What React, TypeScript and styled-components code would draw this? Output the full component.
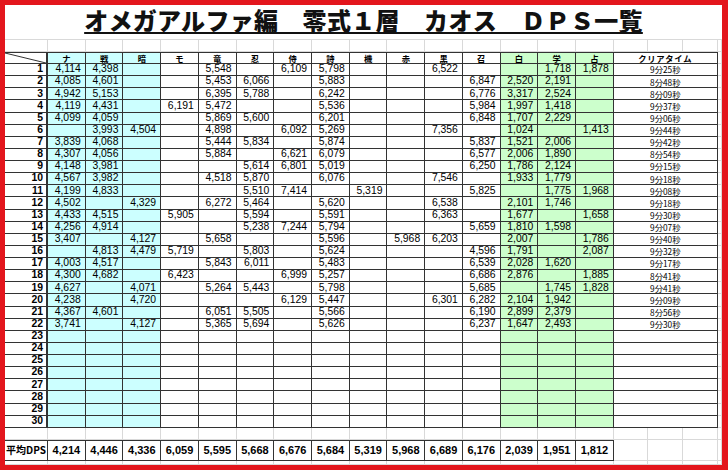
import React from 'react';
import styled, { createGlobalStyle, css } from 'styled-components';

type Tint = 'cyan' | 'green' | 'none';

const JOBS = ['ナ', '戦', '暗', 'モ', '竜', '忍', '侍', '詩', '機', '赤', '黒', '召', '白', '学', '占'];

// 0 = no entry for that job in the run
const RUNS: [number[], string][] = [
  [[4114, 4398, 0, 0, 5548, 0, 6109, 5798, 0, 0, 6522, 0, 0, 1718, 1878], '9分25秒'],
  [[4085, 4601, 0, 0, 5453, 6066, 0, 5883, 0, 0, 0, 6847, 2520, 2191, 0], '8分48秒'],
  [[4942, 5153, 0, 0, 6395, 5788, 0, 6242, 0, 0, 0, 6776, 3317, 2524, 0], '8分09秒'],
  [[4119, 4431, 0, 6191, 5472, 0, 0, 5536, 0, 0, 0, 5984, 1997, 1418, 0], '9分37秒'],
  [[4099, 4059, 0, 0, 5869, 5600, 0, 6201, 0, 0, 0, 6848, 1707, 2229, 0], '9分06秒'],
  [[0, 3993, 4504, 0, 4898, 0, 6092, 5269, 0, 0, 7356, 0, 1024, 0, 1413], '9分44秒'],
  [[3839, 4068, 0, 0, 5444, 5834, 0, 5874, 0, 0, 0, 5837, 1521, 2006, 0], '9分42秒'],
  [[4307, 4056, 0, 0, 5884, 0, 6621, 6079, 0, 0, 0, 6577, 2006, 1890, 0], '8分54秒'],
  [[4148, 3981, 0, 0, 0, 5614, 6801, 5019, 0, 0, 0, 6250, 1786, 2124, 0], '9分15秒'],
  [[4567, 3982, 0, 0, 4518, 5870, 0, 6076, 0, 0, 7546, 0, 1933, 1779, 0], '9分18秒'],
  [[4199, 4833, 0, 0, 0, 5510, 7414, 0, 5319, 0, 0, 5825, 0, 1775, 1968], '9分08秒'],
  [[4502, 0, 4329, 0, 6272, 5464, 0, 5620, 0, 0, 6538, 0, 2101, 1746, 0], '9分18秒'],
  [[4433, 4515, 0, 5905, 0, 5594, 0, 5591, 0, 0, 6363, 0, 1677, 0, 1658], '9分30秒'],
  [[4256, 4914, 0, 0, 0, 5238, 7244, 5794, 0, 0, 0, 5659, 1810, 1598, 0], '9分07秒'],
  [[3407, 0, 4127, 0, 5658, 0, 0, 5596, 0, 5968, 6203, 0, 2007, 0, 1786], '9分40秒'],
  [[0, 4813, 4479, 5719, 0, 5803, 0, 5624, 0, 0, 0, 4596, 1791, 0, 2087], '9分32秒'],
  [[4003, 4517, 0, 0, 5843, 6011, 0, 5483, 0, 0, 0, 6539, 2028, 1620, 0], '9分17秒'],
  [[4300, 4682, 0, 6423, 0, 0, 6999, 5257, 0, 0, 0, 6686, 2876, 0, 1885], '8分41秒'],
  [[4627, 0, 4071, 0, 5264, 5443, 0, 5798, 0, 0, 0, 5685, 0, 1745, 1828], '9分41秒'],
  [[4238, 0, 4720, 0, 0, 0, 6129, 5447, 0, 0, 6301, 6282, 2104, 1942, 0], '9分09秒'],
  [[4367, 4601, 0, 0, 6051, 5505, 0, 5566, 0, 0, 0, 6190, 2899, 2379, 0], '8分56秒'],
  [[3741, 0, 4127, 0, 5365, 5694, 0, 5626, 0, 0, 0, 6237, 1647, 2493, 0], '9分30秒'],
];

const AVERAGES = [4214, 4446, 4336, 6059, 5595, 5668, 6676, 5684, 5319, 5968, 6689, 6176, 2039, 1951, 1812];

const ROW_COUNT = 30;
const SHEET_COLS = 20;

const tintOf = (i: number): Tint => (i < 3 ? 'cyan' : i > 11 ? 'green' : 'none');
const fmt = (n: number) => (n ? n.toLocaleString('en-US') : '');

const TINT_BG: Record<Tint, string> = {
  cyan: '#ccffff',
  green: '#ccffcc',
  none: '#ffffff',
};

const GlobalStyle = createGlobalStyle`
  * { box-sizing: border-box; }
  html, body { margin: 0; padding: 0; background: #fff; }
  body { font-family: 'Noto Sans CJK JP', sans-serif; color: #000; }
`;

const App = () => {
  const runs = Array.from({ length: ROW_COUNT }, (_, i) => RUNS[i]);
  return (
    <>
      <GlobalStyle />
      <Sheet>
        <Title>オメガアルファ編　零式１層　カオス　ＤＰＳ一覧</Title>

        {Array.from({ length: SHEET_COLS }, (_, i) => (
          <Blank key={`gap-a-${i}`} />
        ))}

        <Corner>
          <svg width="100%" height="100%" viewBox="0 0 43 12" preserveAspectRatio="none">
            <line x1="0" y1="0" x2="43" y2="12" stroke="#333" strokeWidth="1" vectorEffect="non-scaling-stroke" />
          </svg>
        </Corner>
        {JOBS.map((j, i) => (
          <JobHead key={j} $tint={tintOf(i)}>
            {j}
          </JobHead>
        ))}
        <JobHead $span={3}>クリアタイム</JobHead>
        <Blank />

        {runs.map((run, r) => (
          <React.Fragment key={`run-${r}`}>
            <RowNum>{r + 1}</RowNum>
            {JOBS.map((j, i) => (
              <Value key={j} $tint={tintOf(i)}>
                {run ? fmt(run[0][i]) : ''}
              </Value>
            ))}
            <Time>{run ? run[1] : ''}</Time>
            <Blank />
          </React.Fragment>
        ))}

        {Array.from({ length: SHEET_COLS }, (_, i) => (
          <Blank key={`gap-b-${i}`} />
        ))}

        <AvgLabel>平均DPS</AvgLabel>
        {AVERAGES.map((a, i) => (
          <AvgValue key={JOBS[i]}>{fmt(a)}</AvgValue>
        ))}
        <Blank />
        <Blank />
        <Blank />
        <Blank />

        {Array.from({ length: SHEET_COLS }, (_, i) => (
          <Blank key={`gap-c-${i}`} />
        ))}
      </Sheet>
    </>
  );
};

export default App;

const Sheet = styled.div`
  width: 728px;
  height: 470px;
  border: 5px solid #e3161d;
  border-right-width: 6px;
  background: #fff;
  display: grid;
  grid-template-columns: 43px repeat(15, 37.73px) repeat(3, 34.67px) 1fr;
  grid-template-rows: 35px 12px 12px repeat(30, 12.133px) 12px 21px 1fr;
  overflow: hidden;
`;

const Title = styled.h1`
  grid-column: 1 / -1;
  margin: 0;
  padding-bottom: 4px;
  border-bottom: 1px solid #d9d9d9;
  display: flex;
  align-items: center;
  justify-content: center;
  font-family: 'Noto Sans CJK JP', sans-serif;
  font-weight: 900;
  font-size: 24px;
  line-height: 1;
  letter-spacing: 0.3px;
  color: #111;
  text-decoration: underline;
  text-decoration-thickness: 2px;
  text-underline-offset: 2px;
`;

const Blank = styled.div`
  border-right: 1px solid #d9d9d9;
  border-bottom: 1px solid #d9d9d9;
`;

const frame = css`
  border-right: 1px solid #333;
  border-bottom: 1px solid #333;
  display: flex;
  align-items: center;
  white-space: nowrap;
  line-height: 1;
`;

const Corner = styled.div`
  ${frame};
  border-top: 1px solid #333;
  border-right-width: 2px;
  svg {
    display: block;
  }
`;

const JobHead = styled.div<{ $tint?: Tint; $span?: number }>`
  ${frame};
  grid-column: span ${(p) => p.$span ?? 1};
  border-top: 1px solid #333;
  justify-content: center;
  background: ${(p) => TINT_BG[p.$tint ?? 'none']};
  font-family: 'Noto Sans CJK JP', sans-serif;
  font-weight: 700;
  font-size: 8.3px;
  letter-spacing: ${(p) => (p.$span ? '0.7px' : '0')};
`;

const RowNum = styled.div`
  ${frame};
  border-right-width: 2px;
  justify-content: flex-end;
  padding-right: 3px;
  font-family: 'Liberation Sans', sans-serif;
  font-weight: 700;
  font-size: 10.4px;
`;

const Value = styled.div<{ $tint: Tint }>`
  ${frame};
  justify-content: flex-end;
  padding-right: 4px;
  background: ${(p) => TINT_BG[p.$tint]};
  font-family: 'Liberation Sans', sans-serif;
  font-size: 10.4px;
`;

const Time = styled.div`
  ${frame};
  grid-column: span 3;
  justify-content: center;
  font-family: 'Noto Sans CJK JP', sans-serif;
  font-size: 8.3px;
`;

const AvgLabel = styled.div`
  ${frame};
  border-top: 1px solid #333;
  justify-content: center;
  font-family: 'Noto Sans CJK JP', sans-serif;
  font-weight: 700;
  font-size: 10px;
`;

const AvgValue = styled.div`
  ${frame};
  border-top: 1px solid #333;
  justify-content: center;
  font-family: 'Liberation Sans', sans-serif;
  font-weight: 700;
  font-size: 11px;
`;
